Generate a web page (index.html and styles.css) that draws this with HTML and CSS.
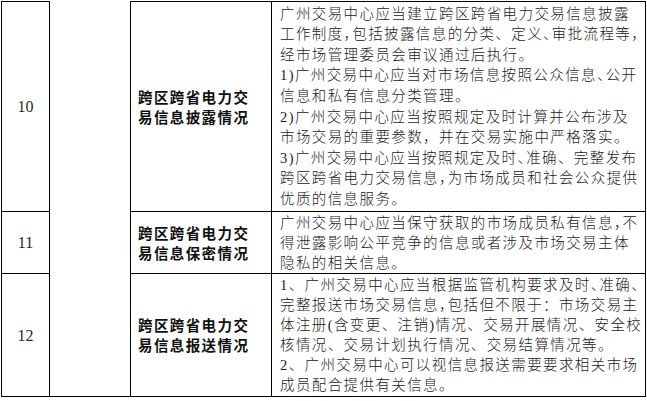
FILE: index.html
```html
<!DOCTYPE html>
<html lang="zh-CN">
<head>
<meta charset="utf-8">
<title>跨区跨省电力交易信息</title>
<link rel="stylesheet" href="styles.css">
</head>
<body>
<div class="table">
  <div class="cell num r1 first">10</div>
  <div class="cell blank"></div>
  <div class="cell title r1 first"><span class="ln">跨区跨省电力交</span><span class="ln">易信息披露情况</span></div>
  <div class="cell desc r1 first tall">
    <span class="ln">广州交易中心应当建立跨区跨省电力交易信息披露</span>
    <span class="ln">工作制度<span class="h">，</span>包括披露信息的分类、定义<span class="h">、</span>审批流程等<span class="h">，</span></span>
    <span class="ln">经市场管理委员会审议通过后执行。</span>
    <span class="ln">1)广州交易中心应当对市场信息按照公众信息<span class="h">、</span>公开</span>
    <span class="ln">信息和私有信息分类管理。</span>
    <span class="ln">2)广州交易中心应当按照规定及时计算并公布涉及</span>
    <span class="ln">市场交易的重要参数，并在交易实施中严格落实。</span>
    <span class="ln">3)广州交易中心应当按照规定及时<span class="h">、</span>准确、完整发布</span>
    <span class="ln">跨区跨省电力交易信息<span class="h">，</span>为市场成员和社会公众提供</span>
    <span class="ln">优质的信息服务。</span>
  </div>

  <div class="cell num r2">11</div>
  <div class="cell title r2"><span class="ln">跨区跨省电力交</span><span class="ln">易信息保密情况</span></div>
  <div class="cell desc r2">
    <span class="ln">广州交易中心应当保守获取的市场成员私有信息<span class="h">，</span>不</span>
    <span class="ln">得泄露影响公平竞争的信息或者涉及市场交易主体</span>
    <span class="ln">隐私的相关信息。</span>
  </div>

  <div class="cell num r3">12</div>
  <div class="cell title r3"><span class="ln">跨区跨省电力交</span><span class="ln">易信息报送情况</span></div>
  <div class="cell desc r3">
    <span class="ln">1、广州交易中心应当根据监管机构要求及时<span class="h">、</span>准确<span class="h">、</span></span>
    <span class="ln">完整报送市场交易信息<span class="h">，</span>包括但不限于：市场交易主</span>
    <span class="ln">体注册(含变更、注销)情况、交易开展情况、安全校</span>
    <span class="ln">核情况、交易计划执行情况、交易结算情况等。</span>
    <span class="ln">2、广州交易中心可以视信息报送需要要求相关市场</span>
    <span class="ln">成员配合提供有关信息。</span>
  </div>
</div>
</body>
</html>
```

FILE: styles.css
```css
* {
  box-sizing: border-box;
}

html, body {
  margin: 0;
  padding: 0;
  background: #ffffff;
}

body {
  font-family: "Liberation Serif", "Noto Sans CJK SC", serif;
  font-size: 14.5px;
  color: #222222;
}

.table {
  display: grid;
  grid-template-columns: 48px 81px 141px 374px;
  grid-template-rows: 211px 62px 123px;
  margin: 1px 0 0 1px;
  border-left: 1px solid #000;
  width: 645px;
}

.cell {
  border-right: 1px solid #000;
  border-bottom: 1px solid #000;
  display: flex;
  flex-direction: column;
  justify-content: center;
}

.cell.first {
  border-top: 1px solid #000;
}

.cell.r1 { grid-row: 1; }
.cell.r2 { grid-row: 2; }
.cell.r3 { grid-row: 3; }

.num {
  grid-column: 1;
  align-items: center;
  font-family: "Liberation Serif", serif;
  font-size: 16px;
  color: #2a2a2a;
  padding-top: 1px;
}

.blank {
  grid-column: 2;
  grid-row: 1 / 4;
}

.title {
  grid-column: 3;
  padding-left: 7px;
  font-family: "Noto Sans CJK SC", sans-serif;
  font-weight: 700;
  color: #111;
  letter-spacing: 1.4px;
  line-height: 20px;
}

.desc {
  grid-column: 4;
  padding-left: 8px;
  letter-spacing: 1.4px;
  line-height: 20px;
  font-weight: 300;
}

.desc .ln {
  height: 20px;
}

.desc.tall {
  line-height: 20.6px;
}

.desc.tall .ln {
  height: 20.6px;
}

.ln {
  display: block;
  white-space: nowrap;
}

.h {
  font-feature-settings: "halt" 1;
}
```
